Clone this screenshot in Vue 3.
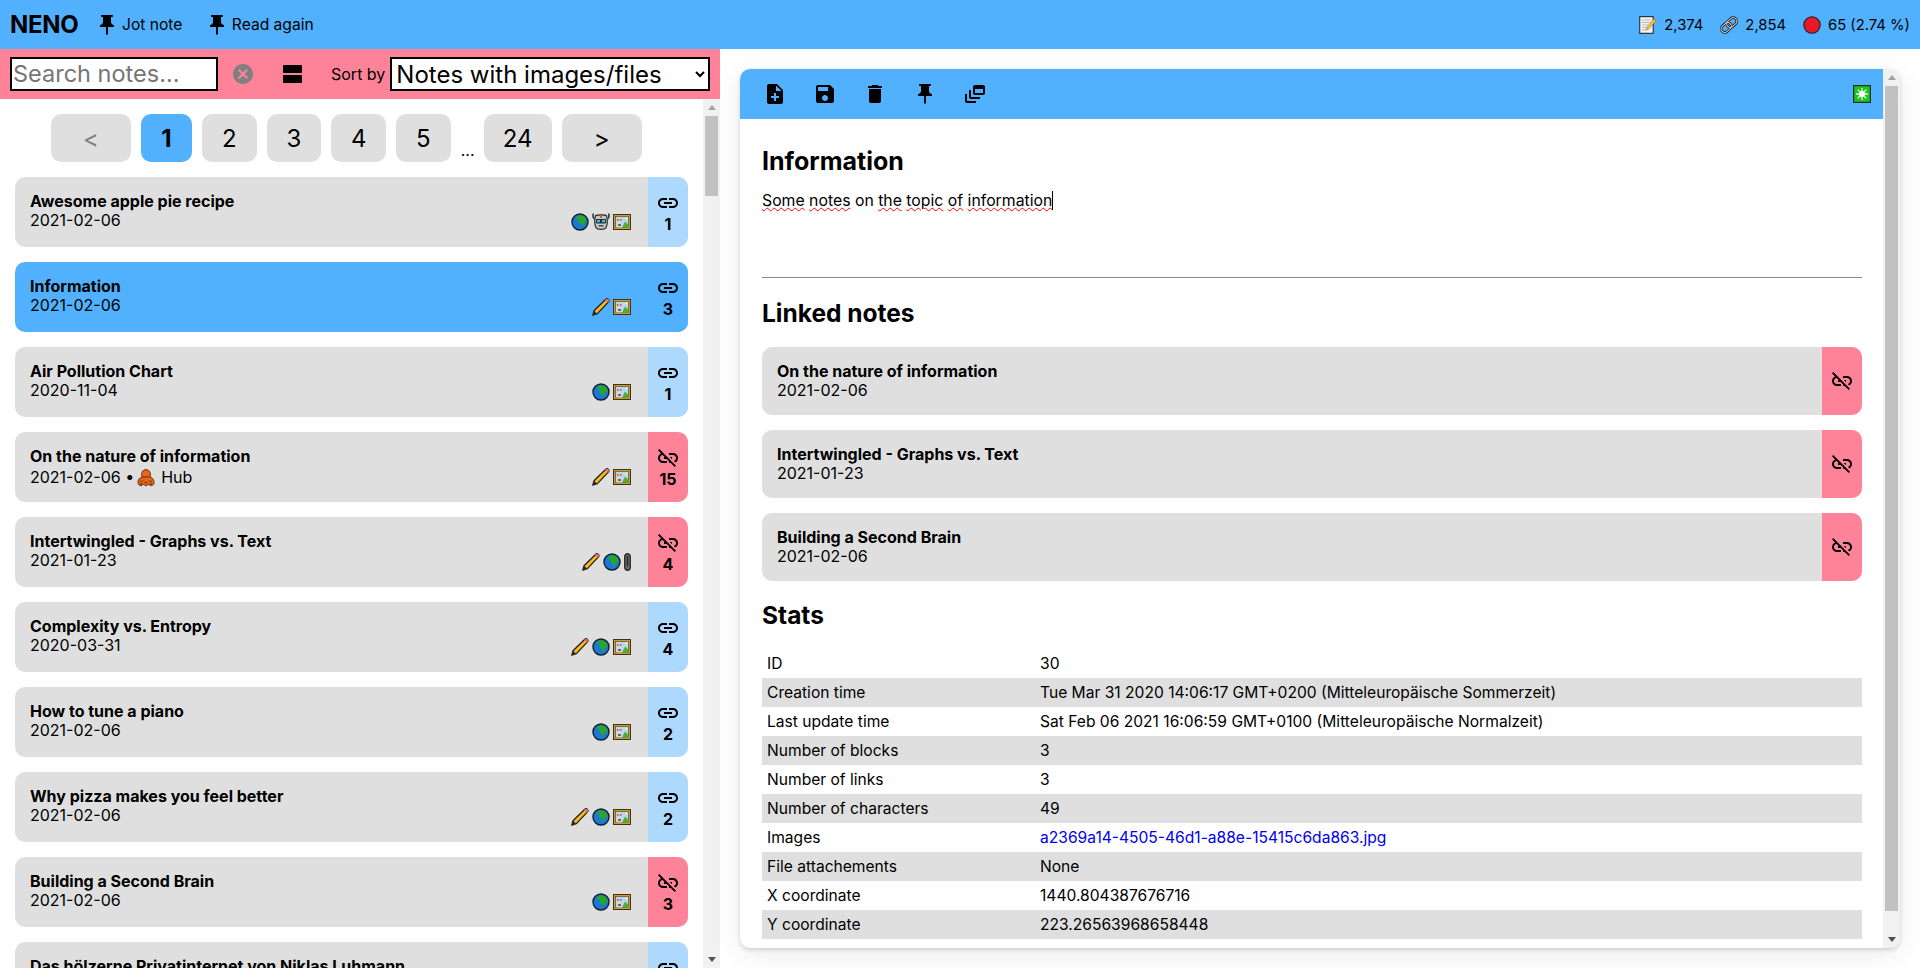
<script setup>
const pin = "M16 9V4h1c.55 0 1-.45 1-1s-.45-1-1-1H7c-.55 0-1 .45-1 1s.45 1 1 1h1v5c0 1.66-1.34 3-3 3v2h5.97v7l1 1 1-1v-7H19v-2c-1.66 0-3-1.34-3-3z";
const link = "M3.9 12c0-1.71 1.39-3.1 3.1-3.1h4V7H7c-2.76 0-5 2.24-5 5s2.24 5 5 5h4v-1.9H7c-1.71 0-3.1-1.39-3.1-3.1zM8 13h8v-2H8v2zm9-6h-4v1.9h4c1.71 0 3.1 1.39 3.1 3.1s-1.39 3.1-3.1 3.1h-4V17h4c2.76 0 5-2.24 5-5s-2.24-5-5-5z";
const linkOff = "M17 7h-4v1.9h4c1.71 0 3.1 1.39 3.1 3.1 0 1.43-.98 2.63-2.31 2.98l1.46 1.46C20.88 15.61 22 13.95 22 12c0-2.76-2.24-5-5-5zm-1 4h-2.19l2 2H16zM2 4.27l3.11 3.11C3.29 8.12 2 9.91 2 12c0 2.76 2.24 5 5 5h4v-1.9H7c-1.71 0-3.1-1.39-3.1-3.1 0-1.59 1.21-2.9 2.76-3.07L8.73 11H8v2h2.73L13 15.27V17h1.73l4.01 4L20 19.74 3.27 3 2 4.27z";
const tools = [
  "M14 2H6c-1.1 0-1.99.9-1.99 2L4 20c0 1.1.89 2 1.99 2H18c1.1 0 2-.9 2-2V8l-6-6zm2 14h-3v3h-2v-3H8v-2h3v-3h2v3h3v2zm-3-7V3.5L18.5 9H13z",
  "M17 3H5c-1.11 0-2 .9-2 2v14c0 1.1.89 2 2 2h14c1.1 0 2-.9 2-2V7l-4-4zm-5 16c-1.66 0-3-1.34-3-3s1.34-3 3-3 3 1.34 3 3-1.34 3-3 3zm3-10H5V5h10v4z",
  "M6 19c0 1.1.9 2 2 2h8c1.1 0 2-.9 2-2V7H6v12zM19 4h-3.5l-1-1h-5l-1 1H5v2h14V4z",
  pin,
  "M8 8H6v7c0 1.1.9 2 2 2h9v-2H8V8zM20 3h-8c-1.1 0-2 .9-2 2v6c0 1.1.9 2 2 2h8c1.1 0 2-.9 2-2V5c0-1.1-.9-2-2-2zm0 8h-8V7h8v4zM4 12H2v7c0 1.1.9 2 2 2h9v-2H4v-7z"
];
const pages = ["2", "3", "4", "5"];
const notes = [
  { t: "Awesome apple pie recipe", d: "2021-02-06", i: ["globe", "robot", "pic"], n: 1 },
  { t: "Information", d: "2021-02-06", i: ["pencil", "pic"], n: 3, active: true },
  { t: "Air Pollution Chart", d: "2020-11-04", i: ["globe", "pic"], n: 1 },
  { t: "On the nature of information", d: "2021-02-06", i: ["pencil", "pic"], n: 15, hub: true, off: true },
  { t: "Intertwingled - Graphs vs. Text", d: "2021-01-23", i: ["pencil", "globe", "clip"], n: 4, off: true },
  { t: "Complexity vs. Entropy", d: "2020-03-31", i: ["pencil", "globe", "pic"], n: 4 },
  { t: "How to tune a piano", d: "2021-02-06", i: ["globe", "pic"], n: 2 },
  { t: "Why pizza makes you feel better", d: "2021-02-06", i: ["pencil", "globe", "pic"], n: 2 },
  { t: "Building a Second Brain", d: "2021-02-06", i: ["globe", "pic"], n: 3, off: true },
  { t: "Das hölzerne Privatinternet von Niklas Luhmann", d: "2021-02-06", i: ["globe", "pic"], n: 1 }
];
const linked = [
  { t: "On the nature of information", d: "2021-02-06" },
  { t: "Intertwingled - Graphs vs. Text", d: "2021-01-23" },
  { t: "Building a Second Brain", d: "2021-02-06" }
];
const stats = [
  ["ID", "30"],
  ["Creation time", "Tue Mar 31 2020 14:06:17 GMT+0200 (Mitteleuropäische Sommerzeit)"],
  ["Last update time", "Sat Feb 06 2021 16:06:59 GMT+0100 (Mitteleuropäische Normalzeit)"],
  ["Number of blocks", "3"],
  ["Number of links", "3"],
  ["Number of characters", "49"],
  ["Images", "a2369a14-4505-46d1-a88e-15415c6da863.jpg", true],
  ["File attachements", "None"],
  ["X coordinate", "1440.804387676716"],
  ["Y coordinate", "223.26563968658448"]
];
const spell = ["Some", " ", "notes", " on ", "the", " ", "topic", " ", "of", " ", "information"];
</script>

<template>
  <div class="app">
    <svg class="defs" aria-hidden="true">
      <symbol id="globe" viewBox="0 0 18 18">
        <circle cx="9" cy="9" r="8" fill="#1b78d6" stroke="#13202c" stroke-width="1.4" />
        <path d="M6 3.2c2-1 5-.9 7 .4 1.600 1.200 2.600 3 2.600 5-.8.900-1.800.900-2.700 1.600-.6.900-.6 2.300-1.400 3.200-.8.300-1.100-1-1.200-2.100-.7-.6-2-.6-2.500-1.500-.4-1 .1-2-.6-2.800C6.500 6.300 5.400 5.900 5 5c0-.7.500-1.300 1-1.800z" fill="#2aa52a" />
      </symbol>
      <symbol id="robot" viewBox="0 0 18 18">
        <path d="M1.500.500c-.8 2-.8 4 .8 5.300M16.500.500c.8 2 .8 4-.8 5.300" fill="none" stroke="#2c2c2c" stroke-width="1.500" />
        <path d="M3.500 2.800C5 1.600 13 1.600 14.500 2.800c1 3.500.800 9-.6 12-1.500 2-8.300 2-9.800 0-1.400-3-1.600-8.500-.6-12z" fill="#c8c8c8" stroke="#262626" stroke-width="1.200" />
        <rect x="8" y="2" width="2" height="3" fill="#e4572e" />
        <rect x="4" y="6" width="10" height="4.500" rx="1" fill="#1e2f3a" />
        <rect x="5" y="7" width="3" height="2.200" fill="#3cc5e8" />
        <rect x="10" y="7" width="3" height="2.200" fill="#3cc5e8" />
        <rect x="6.500" y="12" width="5" height="1.600" fill="#555" />
      </symbol>
      <symbol id="pic" viewBox="0 0 18 16">
        <rect x=".5" y=".5" width="17" height="15" fill="#d79c18" stroke="#3a3220" />
        <rect x="2.500" y="2.500" width="13" height="11" fill="#b8d8ec" stroke="#3c3c3c" stroke-width=".6" />
        <path d="M9 13.500l3-6 3.500 3.500v2.500z" fill="#4caf3a" />
        <path d="M4 5h1.200v1.500h2V5h1.200v3.500l1 1v4H3.500v-4l.5-1z" fill="#d6d6de" />
        <path d="M4 5h1.200v1.500h2V5h1.200v1.800H4z" fill="#c93a3a" />
        <rect x="5" y="10" width="3" height="2" fill="#5b6b80" />
        <circle cx="13.500" cy="4.500" r="1" fill="#fff5c0" />
      </symbol>
      <symbol id="pencil" viewBox="0 0 18 18">
        <path d="M.8 17.200l1.200-4.500L13.800 1.200c.8-.8 1.800-.6 2.500.1.800.8 1 1.800.2 2.600L5.200 15.800z" fill="#f8b71c" stroke="#1a1a1a" stroke-width="1.200" stroke-linejoin="round" />
        <path d="M13.800 1.200c.8-.8 1.800-.6 2.500.1.800.8 1 1.800.2 2.600l-.8.8-2.700-2.700z" fill="#ef6a7a" />
        <path d="M.8 17.200l1.200-4.500 3.200 3.100z" fill="#2a2a2a" />
      </symbol>
      <symbol id="clip" viewBox="0 0 7 18">
        <rect x=".7" y=".7" width="5.600" height="16.600" rx="2.800" fill="#666" stroke="#222" stroke-width="1.200" />
        <path d="M3.500 3v10" stroke="#222" stroke-width="1.200" />
      </symbol>
      <symbol id="octopus" viewBox="0 0 18 18">
        <ellipse cx="9" cy="5.500" rx="4.500" ry="5" fill="#e8651a" stroke="#4a2208" stroke-width=".8" />
        <path d="M5 8c-3 1-4.500 3-4 6.500.5 1.800 2.500 2.500 4 2l1-1.500 3 2 3-2 1 1.500c1.500.5 3.500-.2 4-2 .5-3.500-1-5.500-4-6.500z" fill="#e8651a" stroke="#4a2208" stroke-width=".8" />
        <path d="M3 12c1 1 2 1 3-.5M15 12c-1 1-2 1-3-.5M7.500 13c1 1 2 1 3 0M3 15h2M13 15h2" fill="none" stroke="#4a2208" stroke-width=".9" />
      </symbol>
      <symbol id="memo" viewBox="0 0 18 18">
        <path d="M.700.700h13.500v16.600H.700z" fill="#f4f4f4" stroke="#2a3a48" stroke-width="1.200" />
        <path d="M3 4h9M3 6.500h9M3 9h6M3 11.500h4M3 14h4" stroke="#b9b9b9" stroke-width="1" />
        <path d="M7 14l1-3 7-8 2 1.800-7 8z" fill="#f8c33c" stroke="#7a5a10" stroke-width=".5" />
        <path d="M15 3l1-1 1.700 1.500-1 1.200z" fill="#ee6a6a" />
      </symbol>
      <symbol id="links" viewBox="0 0 18 18">
        <g transform="rotate(-42 9 9)" fill="none">
          <rect x="-.2" y="5.400" width="11" height="7.200" rx="3.600" stroke="#111" stroke-width="2.600" />
          <rect x="7.200" y="5.400" width="11" height="7.200" rx="3.600" stroke="#111" stroke-width="2.600" />
          <rect x="-.2" y="5.400" width="11" height="7.200" rx="3.600" stroke="#d4d4d4" stroke-width="1" />
          <rect x="7.200" y="5.400" width="11" height="7.200" rx="3.600" stroke="#d4d4d4" stroke-width="1" />
        </g>
      </symbol>
      <symbol id="spark" viewBox="0 0 18 18">
        <rect x=".5" y=".5" width="17" height="17" fill="#1fc41f" stroke="#1c2b33" stroke-width="1.400" />
        <path d="M9 3v12M3 9h12M4.800 4.800l8.400 8.400M13.200 4.800l-8.400 8.400" stroke="#d9fbd9" stroke-width="1.300" />
        <circle cx="9" cy="9" r="3" fill="#fff" />
      </symbol>
    </svg>

    <header class="top">
      <strong class="logo">NENO</strong>
      <span class="pinned"><svg viewBox="0 0 24 24"><path :d="pin" /></svg>Jot note</span>
      <span class="pinned"><svg viewBox="0 0 24 24"><path :d="pin" /></svg>Read again</span>
      <div class="totals">
        <span class="total"><svg><use href="#memo" /></svg>2,374</span>
        <span class="total"><svg><use href="#links" /></svg>2,854</span>
        <span class="total"><svg viewBox="0 0 18 18"><circle cx="9" cy="9" r="8.200" fill="#e8182b" stroke="#1c1c1c" stroke-width="1.100" /></svg>65 (2.74 %)</span>
      </div>
    </header>

    <main class="body">
      <section class="left">
        <div class="filters">
          <input class="search" placeholder="Search notes..." />
          <svg class="clear" viewBox="2 2 20 20"><path d="M12 2C6.470 2 2 6.470 2 12s4.470 10 10 10 10-4.470 10-10S17.530 2 12 2zm5 13.590L15.590 17 12 13.410 8.410 17 7 15.590 10.590 12 7 8.410 8.410 7 12 10.590 15.590 7 17 8.410 13.410 12 17 15.590z" /></svg>
          <svg class="agenda" viewBox="0 0 24 24"><path d="M20 13H3c-.55 0-1 .45-1 1v6c0 .55.45 1 1 1h17c.55 0 1-.45 1-1v-6c0-.55-.45-1-1-1zm0-10H3c-.55 0-1 .45-1 1v6c0 .55.45 1 1 1h17c.55 0 1-.45 1-1V4c0-.55-.45-1-1-1z" /></svg>
          <label class="sortlabel">Sort by</label>
          <select class="sort"><option>Notes with images/files</option></select>
        </div>
        <div class="listrow">
          <div class="listscroll">
            <nav class="pager">
              <button class="pg wide muted">&lt;</button>
              <button class="pg cur">1</button>
              <button v-for="p in pages" :key="p" class="pg">{{ p }}</button>
              <span class="dots">...</span>
              <button class="pg w24">24</button>
              <button class="pg wide">&gt;</button>
            </nav>
            <div class="notes">
              <article v-for="n in notes" :key="n.t" class="note" :class="{ active: n.active }">
                <div class="main">
                  <div class="texts">
                    <div class="title">{{ n.t }}</div>
                    <div class="date" :class="{ hubrow: n.hub }">
                      {{ n.d }}<template v-if="n.hub"> •
                        <svg class="octo"><use href="#octopus" /></svg> Hub</template>
                    </div>
                  </div>
                  <div class="icons">
                    <svg v-for="i in n.i" :key="i" class="em" :class="'em-' + i"><use :href="'#' + i" /></svg>
                  </div>
                </div>
                <div class="side" :class="{ off: n.off }">
                  <svg viewBox="0 0 24 24"><path :d="n.off ? linkOff : link" /></svg>
                  <b>{{ n.n }}</b>
                </div>
              </article>
            </div>
          </div>
          <div class="sbar">
            <i class="up"></i>
            <i class="thumb list-thumb"></i>
            <i class="down"></i>
          </div>
        </div>
      </section>

      <section class="right">
        <div class="card">
          <div class="cardinner">
            <div class="toolbar">
              <span v-for="(d, i) in tools" :key="i" class="tool"><svg viewBox="0 0 24 24"><path :d="d" /></svg></span>
              <svg class="status"><use href="#spark" /></svg>
            </div>
            <div class="content">
              <h1>Information</h1>
              <p class="text"><template v-for="(w, i) in spell" :key="i"><u v-if="i % 2 === 0">{{ w }}</u><template v-else>{{ w }}</template></template><i class="caret"></i></p>
              <hr />
              <h2 class="h-linked">Linked notes</h2>
              <article v-for="l in linked" :key="l.t" class="note link-note">
                <div class="main">
                  <div class="texts">
                    <div class="title">{{ l.t }}</div>
                    <div class="date">{{ l.d }}</div>
                  </div>
                </div>
                <div class="side off"><svg viewBox="0 0 24 24"><path :d="linkOff" /></svg></div>
              </article>
              <h2 class="h-stats">Stats</h2>
              <table>
                <tbody>
                  <tr v-for="r in stats" :key="r[0]">
                    <td class="k">{{ r[0] }}</td>
                    <td><span v-if="r[2]" class="filelink">{{ r[1] }}</span><template v-else>{{ r[1] }}</template></td>
                  </tr>
                </tbody>
              </table>
            </div>
          </div>
          <div class="sbar">
            <i class="up"></i>
            <i class="thumb card-thumb"></i>
            <i class="down"></i>
          </div>
        </div>
      </section>
    </main>
  </div>
</template>

<style>
html, body { margin: 0; height: 100%; overflow: hidden; background: #fff; }
</style>

<style scoped>
.app {
  --blue: #52b1ff;
  --pink: #ff8398;
  --pale: #add9ff;
  --grey: #dfdfdf;
  height: 968px;
  display: flex;
  flex-direction: column;
  font-family: Inter, "Noto Sans", sans-serif;
  font-size: 16px;
  color: #000;
}
.defs { width: 0; height: 0; position: absolute; }
svg { display: block; flex: none; }

.top {
  flex: none;
  height: 49px;
  background: var(--blue);
  display: flex;
  align-items: center;
  padding: 0 10px;
  box-sizing: border-box;
}
.logo { font-size: 24px; font-weight: 700; width: 85px; letter-spacing: -.3px; }
.pinned { display: flex; align-items: center; font-size: 15.6px; margin-right: 22.5px; }
.pinned svg { width: 24px; height: 24px; margin-right: 3px; }
.totals { margin-left: auto; display: flex; gap: 17px; font-size: 14.8px; }
.total { display: flex; align-items: center; gap: 7px; }
.total svg { width: 18px; height: 18px; }

.body { flex: 1; display: flex; min-height: 0; }
.left { width: 720px; flex: none; display: flex; flex-direction: column; }
.filters {
  flex: none;
  height: 50px;
  background: var(--pink);
  display: flex;
  align-items: center;
  padding-left: 10px;
  box-sizing: border-box;
}
.search {
  width: 208px;
  height: 34px;
  box-sizing: border-box;
  border: 2px solid #000;
  border-radius: 0;
  padding: 0 2px 1px 1px;
  background: #fff;
  font: 23.500px Inter, sans-serif;
  outline: none;
}
.search::placeholder { color: #757575; }
.clear { width: 20px; height: 20px; fill: #808080; margin-left: 15px; }
.agenda { width: 24px; height: 24px; margin-left: 28px; }
.sortlabel { margin-left: 26px; margin-right: 5px; }
.sort {
  width: 320px;
  height: 34px;
  box-sizing: border-box;
  border: 2px solid #000;
  border-radius: 0;
  background: #fff;
  font: 24px Inter, sans-serif;
  color: #000;
  padding: 0;
}

.listrow { flex: 1; display: flex; min-height: 0; }
.listscroll { flex: 1; overflow: hidden; min-width: 0; }
.pager { display: flex; align-items: flex-end; gap: 10px; padding: 15px 0 15px 51px; }
.pg {
  height: 48px;
  width: 54.700px;
  border: 0;
  border-radius: 10px;
  background: var(--grey);
  color: #000;
  font: 24px Inter, sans-serif;
  padding: 0;
}
.pg.wide { width: 80px; }
.pg.muted { color: #808080; }
.pg.cur { width: 51px; background: var(--blue); font-weight: 700; }
.pg.w24 { width: 68px; }
.dots { width: 13px; font-size: 16px; line-height: 20px; text-align: center; padding-bottom: 2px; }
.notes { display: flex; flex-direction: column; gap: 15px; padding: 0 15px; }

.note {
  display: flex;
  height: 70px;
  border-radius: 10px;
  overflow: hidden;
  background: var(--grey);
  flex: none;
}
.note.active { background: var(--blue); }
.main { flex: 1; display: flex; justify-content: space-between; padding: 14px 17px 0 15px; min-width: 0; }
.title { font-weight: 700; font-size: 16px; line-height: 20px; white-space: nowrap; }
.date { font-size: 16px; line-height: 19px; white-space: nowrap; display: flex; align-items: center; gap: 6px; }
.hubrow { margin-top: 2px; }
.octo { width: 18px; height: 18px; margin-left: -3px; }
.icons { display: flex; align-items: center; gap: 3px; height: 18px; margin-top: 22px; }
.em { height: 18px; width: 18px; }
.em-pic { height: 16px; }
.em-clip { width: 7px; }
.side {
  width: 40px;
  flex: none;
  background: var(--pale);
  display: flex;
  flex-direction: column;
  align-items: center;
  padding-top: 14px;
  box-sizing: border-box;
}
.active .side { background: var(--blue); }
.side.off { background: var(--pink); }
.side svg { width: 24px; height: 24px; }
.side b { font-size: 16px; line-height: 19px; }

.right { flex: 1; min-width: 0; padding: 20px; box-sizing: border-box; }
.card {
  height: 879px;
  background: #fff;
  border-radius: 10px;
  overflow: hidden;
  display: flex;
  box-shadow: 0 2px 4px rgba(0, 0, 0, .15), 0 6px 30px rgba(0, 0, 0, .08);
}
.cardinner { flex: 1; min-width: 0; }
.toolbar {
  height: 50px;
  background: var(--blue);
  display: flex;
  align-items: center;
  padding: 0 12px 0 10px;
}
.tool { width: 50px; height: 50px; display: flex; align-items: center; justify-content: center; }
.tool svg { width: 24px; height: 24px; }
.status { width: 18px; height: 18px; margin-left: auto; }
.content { padding: 0 21px 9px 22px; }
h1 { font-size: 25px; font-weight: 700; line-height: 30px; margin: 0; padding-top: 27px; }
.text { font-size: 15.800px; line-height: 20px; margin: 15px 0 0; height: 87px; }
.text u { text-decoration: underline wavy #f00 1px; text-underline-offset: 1px; }
.caret { display: inline-block; width: 1px; height: 19px; background: #000; vertical-align: -4px; }
hr { height: 1px; border: 0; background: #8c8c8c; margin: -1px 0 1px; }
h2 { font-size: 24.500px; font-weight: 700; line-height: 30px; margin: 0; }
.h-linked { padding: 19px 0 19px; }
.link-note { height: 68px; margin-bottom: 15px; }
.link-note .main { padding-top: 14px; }
.link-note .side { justify-content: center; padding: 0; }
.h-stats { padding: 4px 0 19px; }
table { width: 100%; border-collapse: collapse; font-size: 15.600px; }
td { height: 29px; padding: 0 5px; }
tr:nth-child(even) td { background: var(--grey); }
td.k { width: 263px; }
.filelink { color: #0000ee; }

.sbar {
  width: 17px;
  flex: none;
  background: #f1f1f1;
  display: flex;
  flex-direction: column;
  align-items: center;
}
.up, .down {
  height: 17px;
  width: 17px;
  flex: none;
  display: flex;
  align-items: center;
  justify-content: center;
}
.up::before, .down::before {
  content: "";
  width: 0;
  height: 0;
  border-left: 4.500px solid transparent;
  border-right: 4.500px solid transparent;
}
.up::before { border-bottom: 5px solid #a3a3a3; }
.down::before { border-top: 5px solid #505050; }
.down { margin-top: auto; }
.thumb { width: 13px; background: #c1c1c1; flex: none; }
.list-thumb { height: 80px; }
.card-thumb { height: 825px; }
</style>
